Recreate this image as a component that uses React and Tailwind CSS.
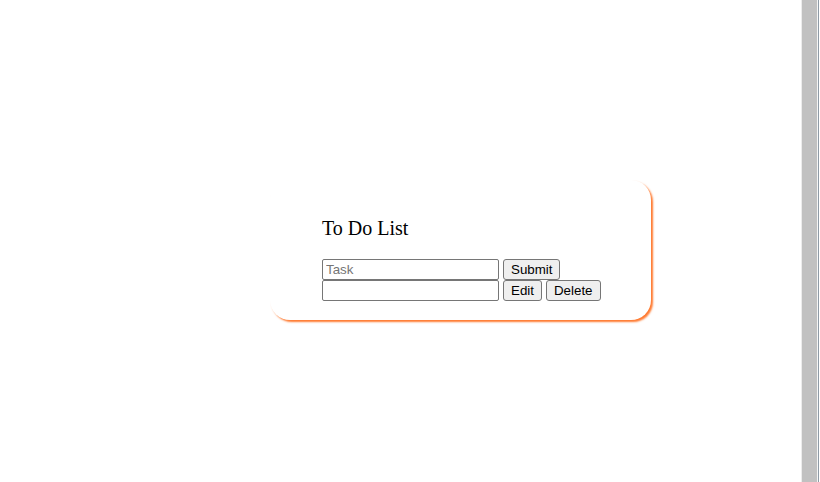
export default function App() {
  return (
    <div className="flex h-[482px] w-full bg-white overflow-hidden">
      {/* Main */}
      <main className="flex-1 pt-[180px] pl-[270px]">
        <div className="w-[381px] h-[140px] rounded-[20px] bg-white shadow-[2px_2px_2px_#ff7a30] pt-[37px] pl-[52px]">
          <h2 className="font-['Liberation_Serif',serif] text-[20px] leading-[22px] text-black">To Do List</h2>
          <div className="mt-[20px] font-['Liberation_Sans',Arial,sans-serif] text-[13.33px] text-black">
            <div className="flex items-start gap-1">
              <input
                type="text"
                placeholder="Task"
                className="w-[177px] h-[21px] border border-[#767676] rounded-[2px] px-[3px] bg-white text-black placeholder:text-[#757575] outline-none"
              />
              <button className="h-[21px] px-[7px] bg-[#efefef] border border-[#767676] rounded-[3px] leading-none">Submit</button>
            </div>
            <div className="flex items-start gap-1">
              <input
                type="text"
                className="w-[177px] h-[21px] border border-[#767676] rounded-[2px] px-[3px] bg-white text-black outline-none"
              />
              <button className="h-[21px] px-[7px] bg-[#efefef] border border-[#767676] rounded-[3px] leading-none">Edit</button>
              <button className="h-[21px] px-[7px] bg-[#efefef] border border-[#767676] rounded-[3px] leading-none">Delete</button>
            </div>
          </div>
        </div>
      </main>

      {/* Scrollbar strip */}
      <div className="flex h-full w-[19px] shrink-0">
        <div className="w-px bg-[#ececec]" />
        <div className="w-[15px] bg-[#c1c1c1]" />
        <div className="w-px bg-[#f5f5f5]" />
        <div className="w-px bg-[#8f9ba6]" />
        <div className="w-px bg-white" />
      </div>
    </div>
  )
}
